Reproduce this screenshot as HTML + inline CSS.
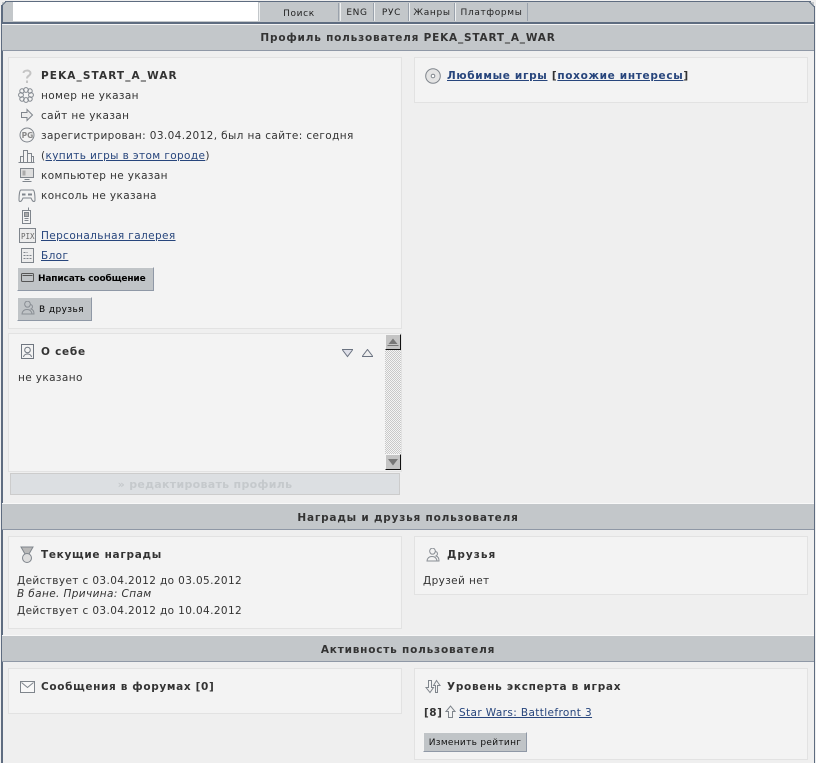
<!DOCTYPE html>
<html><head><meta charset="utf-8"><style>
html,body{margin:0;padding:0;background:#fff}
body{width:816px;height:763px;position:relative;overflow:hidden;font-family:"DejaVu Sans","Liberation Sans",sans-serif;font-size:10.5px;color:#333}
div,a,span,svg{position:absolute;display:block}
a span,.in{position:static;display:inline}
a{color:#27457c;text-decoration:underline}
.t{white-space:nowrap;line-height:14px;height:14px;margin-top:1px}
.b{font-weight:bold}
.hd{left:2px;width:812px;height:25px;background:#c3c7ca;border-bottom:1px solid #8f98a6;text-align:center;font-weight:bold;font-size:10.5px;line-height:27px;color:#333;letter-spacing:.8px}
.p{background:#f3f3f3;border:1px solid #e2e2e2;box-sizing:border-box}
.tab{top:3px;height:18px;background:#c3c7ca;border-left:1px solid #eef0f1;border-right:1px solid #9aa2ac;box-sizing:border-box;text-align:center;line-height:20px;font-size:9px;color:#222;letter-spacing:.65px;white-space:nowrap}
.btn{background:#c0c4c7;border-top:1px solid #f4f4f4;border-left:1px solid #f4f4f4;border-right:1px solid #8f98a6;border-bottom:1px solid #8f98a6;box-sizing:border-box;color:#000;white-space:nowrap}
svg{fill:none;stroke:#7f858c;stroke-width:1;shape-rendering:crispEdges}
</style></head><body>
<div style="left:0;top:0;width:816px;height:763px;background:#efefef"></div>
<div style="left:5px;top:1px;width:806px;height:1px;background:#5e6c80"></div>
<div style="left:2px;top:2px;width:812px;height:20px;background:#c3c7ca"></div>
<div style="left:1px;top:5px;width:2px;height:758px;background:#5e6c80"></div>
<div style="left:814px;top:6px;width:1px;height:757px;background:#5e6c80"></div>
<svg style="left:0;top:0;width:8px;height:8px;stroke:#5e6c80;shape-rendering:auto"><path d="M1.5 6L6 1.5"/></svg>
<svg style="left:808px;top:0;width:8px;height:8px;stroke:#5e6c80;shape-rendering:auto"><path d="M1 1.5L6.5 7"/></svg>
<div style="left:13px;top:2px;width:245px;height:19px;background:#fff"></div>
<div style="left:2px;top:22px;width:812px;height:2px;background:#5e6c80"></div>
<div style="left:2px;top:24px;width:812px;height:1px;background:#f4f4f4"></div>
<div class="tab" style="left:259px;width:80px;line-height:22px">Поиск</div>
<div class="tab" style="left:340px;width:34px">ENG</div>
<div class="tab" style="left:374px;width:35px">РУС</div>
<div class="tab" style="left:409px;width:46px">Жанры</div>
<div class="tab" style="left:455px;width:73px">Платформы</div>

<div class="hd" style="top:25px">Профиль пользователя PEKA_START_A_WAR</div>

<div class="p" style="left:8px;top:57px;width:394px;height:272px"></div>
<div class="t b" style="left:41px;top:68px;letter-spacing:1.1px">PEKA_START_A_WAR</div>
<div class="t" style="left:41px;top:88px;letter-spacing:.38px">номер не указан</div>
<div class="t" style="left:41px;top:108px;letter-spacing:.38px">сайт не указан</div>
<div class="t" style="left:41px;top:128px;letter-spacing:.38px">зарегистрирован: 03.04.2012, был на сайте: сегодня</div>
<div class="t" style="left:41px;top:148px;letter-spacing:.38px">(<a class="in" href="#">купить игры в этом городе</a>)</div>
<div class="t" style="left:41px;top:168px;letter-spacing:.38px">компьютер не указан</div>
<div class="t" style="left:41px;top:188px;letter-spacing:.38px">консоль не указана</div>
<div class="t" style="left:41px;top:228px;letter-spacing:.38px"><a class="in" href="#">Персональная галерея</a></div>
<div class="t" style="left:41px;top:248px;letter-spacing:.38px"><a class="in" href="#">Блог</a></div>

<svg style="left:20px;top:68px;width:14px;height:16px;stroke:#c4c4c4;stroke-width:2;shape-rendering:auto"><path d="M3.5 5C3.5 2 10 1.5 10.5 5C10.5 8 7 7.5 7 10.5M7 12.5V15"/></svg>
<svg style="left:18px;top:87px;width:16px;height:16px;shape-rendering:auto"><circle cx="8" cy="3" r="2.4"/><circle cx="8" cy="13" r="2.4"/><circle cx="3" cy="8" r="2.4"/><circle cx="13" cy="8" r="2.4"/><circle cx="4" cy="4" r="2.2"/><circle cx="12" cy="4" r="2.2"/><circle cx="4" cy="12" r="2.2"/><circle cx="12" cy="12" r="2.2"/></svg>
<svg style="left:20px;top:108px;width:14px;height:14px;shape-rendering:auto"><path d="M1.5 4.5H7V1.5L12.5 7L7 12.5V9.5H1.5Z" fill="#ececec"/></svg>
<svg style="left:19px;top:127px;width:16px;height:16px;shape-rendering:auto"><circle cx="8" cy="8" r="7"/><text x="2.6" y="11" font-size="7.5" font-family="DejaVu Sans" font-weight="bold" fill="#888" stroke="none">PG</text></svg>
<svg style="left:18px;top:148px;width:17px;height:15px"><path d="M.5 14.5H16.5M2.5 14.5V8.5H5.5V14.5M5.5 14.5V2.5H9.5V14.5M9.5 14.5V5.5H13.5V14.5M13.5 8.5H15.5V14.5"/></svg>
<svg style="left:19px;top:168px;width:16px;height:15px"><path d="M1.5 .5H14.5V9.5H1.5Z" fill="#dedede"/><path d="M3.5 2.5H6.5V7.5H3.5Z" fill="#aaa" stroke="none"/><path d="M5.5 11.5H10.5M3.5 13.5H12.5"/></svg>
<svg style="left:18px;top:188px;width:18px;height:15px;shape-rendering:auto"><path d="M3 2H15C16.5 2 17 8 17 12C17 14 15 14 14 12L13 10H5L4 12C3 14 1 14 1 12C1 8 1.5 2 3 2Z"/><path d="M4 6.5H7.5M10 6.5H14" stroke-width="2"/></svg>
<svg style="left:21px;top:207px;width:12px;height:18px"><path d="M1.5 3.5H9.5V16.5H1.5ZM7.5 .5V3.5"/><path d="M3.5 5.5H7.5V9.5H3.5Z" fill="#aaa"/><path d="M3.5 11.5H7.5M3.5 13.5H7.5"/></svg>
<svg style="left:19px;top:228px;width:17px;height:15px"><path d="M.5 .5H16.5V14.5H.5Z" fill="#ececec"/><text x="2" y="11" font-size="7.5" font-family="DejaVu Sans Mono" fill="#666" stroke="none">PIX</text></svg>
<svg style="left:21px;top:248px;width:13px;height:15px"><path d="M.5 .5H12.5V14.5H.5Z" fill="#ececec"/><path d="M2.5 4.5H6.5M2.5 7.5H10.5M2.5 10.5H10.5" stroke-dasharray="2 1"/></svg>

<div class="btn b" style="left:17px;top:267px;width:137px;height:24px;font-size:9px;line-height:23px;padding-left:20px;letter-spacing:-.15px">Написать сообщение</div>
<svg style="left:21px;top:273px;width:13px;height:10px;stroke:#555;shape-rendering:auto"><path d="M1.5 .5H11.5Q12.5 .5 12.5 1.5V7.5Q12.5 8.5 11.5 8.5H1.5Q.5 8.5 .5 7.5V1.5Q.5 .5 1.5 .5ZM1.5 2.5H11.5"/></svg>
<div class="btn" style="left:17px;top:297px;width:75px;height:24px;font-size:9px;line-height:24px;padding-left:21px;letter-spacing:.4px">В друзья</div>
<svg style="left:21px;top:301px;width:14px;height:15px;shape-rendering:auto;stroke:#8a8f95"><path d="M4 4.5A2.8 3 0 1 1 9 4.5A2.8 3 0 0 1 4 4.5ZM1 13C1.5 9 4 8.5 6 8.5C8.5 8.5 10.5 10 11 13ZM9.5 3.5C12 4 12 7 10 8C12 8.5 13 10.5 13 13H11"/></svg>

<div class="p" style="left:8px;top:333px;width:394px;height:139px"></div>
<svg style="left:21px;top:344px;width:13px;height:15px;shape-rendering:auto;stroke:#6f7680"><path d="M.5 .5H12.5V14.5H.5Z"/><circle cx="6.5" cy="6" r="2.8"/><path d="M2.5 13C3 9 10 9 10.5 13"/></svg>
<div class="t b" style="left:41px;top:344px;letter-spacing:.75px">О себе</div>
<div class="t" style="left:18px;top:370px;letter-spacing:.38px">не указано</div>
<svg style="left:341px;top:349px;width:14px;height:9px;shape-rendering:auto;stroke:#6a7280"><path d="M1 .5H12M1.5 1L6.5 7.5L11.5 1" fill="#dedfe8"/></svg>
<svg style="left:361px;top:349px;width:14px;height:9px;shape-rendering:auto;stroke:#6a7280"><path d="M1 7.5H12M1.5 7L6.5 .5L11.5 7" fill="#eee"/></svg>
<div style="left:385px;top:334px;width:16px;height:136px;background-color:#e4e4e4;background-image:repeating-conic-gradient(#c8c8c8 0 25%,#f4f4f4 0 50%);background-size:2px 2px"></div>
<div style="left:385px;top:334px;width:16px;height:16px;background:#c4c4c4;border-top:1px solid #f4f4f4;border-left:1px solid #f4f4f4;border-right:1px solid #111;border-bottom:1px solid #111;box-sizing:border-box"></div>
<svg style="left:386px;top:337px;width:14px;height:10px;stroke:none;fill:#777;shape-rendering:auto"><path d="M1.5 8H12.5V9H1.5ZM7 1.5L11.5 7H2.5Z"/></svg>
<div style="left:385px;top:454px;width:16px;height:16px;background:#c4c4c4;border-top:1px solid #f4f4f4;border-left:1px solid #f4f4f4;border-right:1px solid #111;border-bottom:1px solid #111;box-sizing:border-box"></div>
<svg style="left:386px;top:458px;width:14px;height:9px;stroke:none;fill:#777;shape-rendering:auto"><path d="M2 1H12L7 7.5Z"/></svg>

<div style="left:10px;top:473px;width:390px;height:22px;background:#dcdfe2;border:1px solid #ccc;box-sizing:border-box;text-align:center;font-weight:bold;font-size:11px;line-height:21px;color:#c5c9cc;letter-spacing:.3px">» редактировать профиль</div>

<div style="left:2px;top:503px;width:812px;height:1px;background:#f8f8f8"></div>
<div class="hd" style="top:504px;line-height:28px">Награды и друзья пользователя</div>
<div class="p" style="left:8px;top:536px;width:394px;height:93px"></div>
<svg style="left:19px;top:546px;width:16px;height:18px;shape-rendering:auto"><path d="M2 1H14L10 8H6Z" fill="#b8b8b8"/><circle cx="8" cy="12" r="4.5" fill="#ddd"/></svg>
<div class="t b" style="left:41px;top:547px;letter-spacing:.7px">Текущие награды</div>
<div class="t" style="left:17px;top:573px;letter-spacing:.38px">Действует с 03.04.2012 до 03.05.2012</div>
<div class="t" style="left:17px;top:586px;letter-spacing:.38px;font-style:italic">В бане. Причина: Спам</div>
<div class="t" style="left:17px;top:603px;letter-spacing:.38px">Действует с 03.04.2012 до 10.04.2012</div>

<div class="p" style="left:414px;top:57px;width:394px;height:46px"></div>
<svg style="left:425px;top:68px;width:16px;height:16px;shape-rendering:auto"><circle cx="8" cy="8" r="7.3" fill="#e4e4e4"/><circle cx="8" cy="8" r="1.8" fill="#fff"/></svg>
<div class="t b" style="left:447px;top:68px;letter-spacing:.68px"><a class="in" href="#">Любимые игры</a> [<a class="in" href="#">похожие интересы</a>]</div>

<div class="p" style="left:414px;top:536px;width:394px;height:59px"></div>
<svg style="left:426px;top:548px;width:14px;height:15px;shape-rendering:auto;stroke:#8a8f95"><path d="M4 4.5A2.8 3 0 1 1 9 4.5A2.8 3 0 0 1 4 4.5ZM1 13C1.5 9 4 8.5 6 8.5C8.5 8.5 10.5 10 11 13ZM9.5 3.5C12 4 12 7 10 8C12 8.5 13 10.5 13 13H11"/></svg>
<div class="t b" style="left:447px;top:547px;letter-spacing:1px">Друзья</div>
<div class="t" style="left:423px;top:573px;letter-spacing:.38px">Друзей нет</div>

<div style="left:2px;top:635px;width:812px;height:1px;background:#f8f8f8"></div>
<div class="hd" style="top:636px;line-height:28px">Активность пользователя</div>
<div class="p" style="left:8px;top:668px;width:394px;height:46px"></div>
<svg style="left:20px;top:681px;width:15px;height:12px"><path d="M.5 .5H14.5V11.5H.5Z" fill="#f8f8f8"/><path d="M1.5 1.5L7.5 6.5L13.5 1.5" shape-rendering="auto"/></svg>
<div class="t b" style="left:41px;top:679px;letter-spacing:.65px">Сообщения в форумах [0]</div>

<div class="p" style="left:414px;top:668px;width:394px;height:92px"></div>
<svg style="left:425px;top:679px;width:16px;height:15px;shape-rendering:auto"><path d="M3.5 1.5H6.5V8.5H8.5L5 13.5L1 8.5H3.5Z"/><path d="M10.5 13.5H12.5V6.5H15L11.5 1.5L8.5 6.5H10.5Z" fill="#f3f3f3"/></svg>
<div class="t b" style="left:447px;top:679px;letter-spacing:.72px">Уровень эксперта в играх</div>
<div class="t b" style="left:424px;top:705px;letter-spacing:.5px">[8]</div>
<svg style="left:445px;top:705px;width:11px;height:13px;shape-rendering:auto"><path d="M3.5 12.5V6.5H1L5.5 1L10 6.5H7.5V12.5Z"/></svg>
<div class="t" style="left:459px;top:705px;letter-spacing:.38px"><a class="in" href="#">Star Wars: Battlefront 3</a></div>
<div class="btn" style="left:423px;top:732px;width:104px;height:20px;font-size:9px;line-height:20px;text-align:center;letter-spacing:.3px;color:#111">Изменить рейтинг</div>
</body></html>
